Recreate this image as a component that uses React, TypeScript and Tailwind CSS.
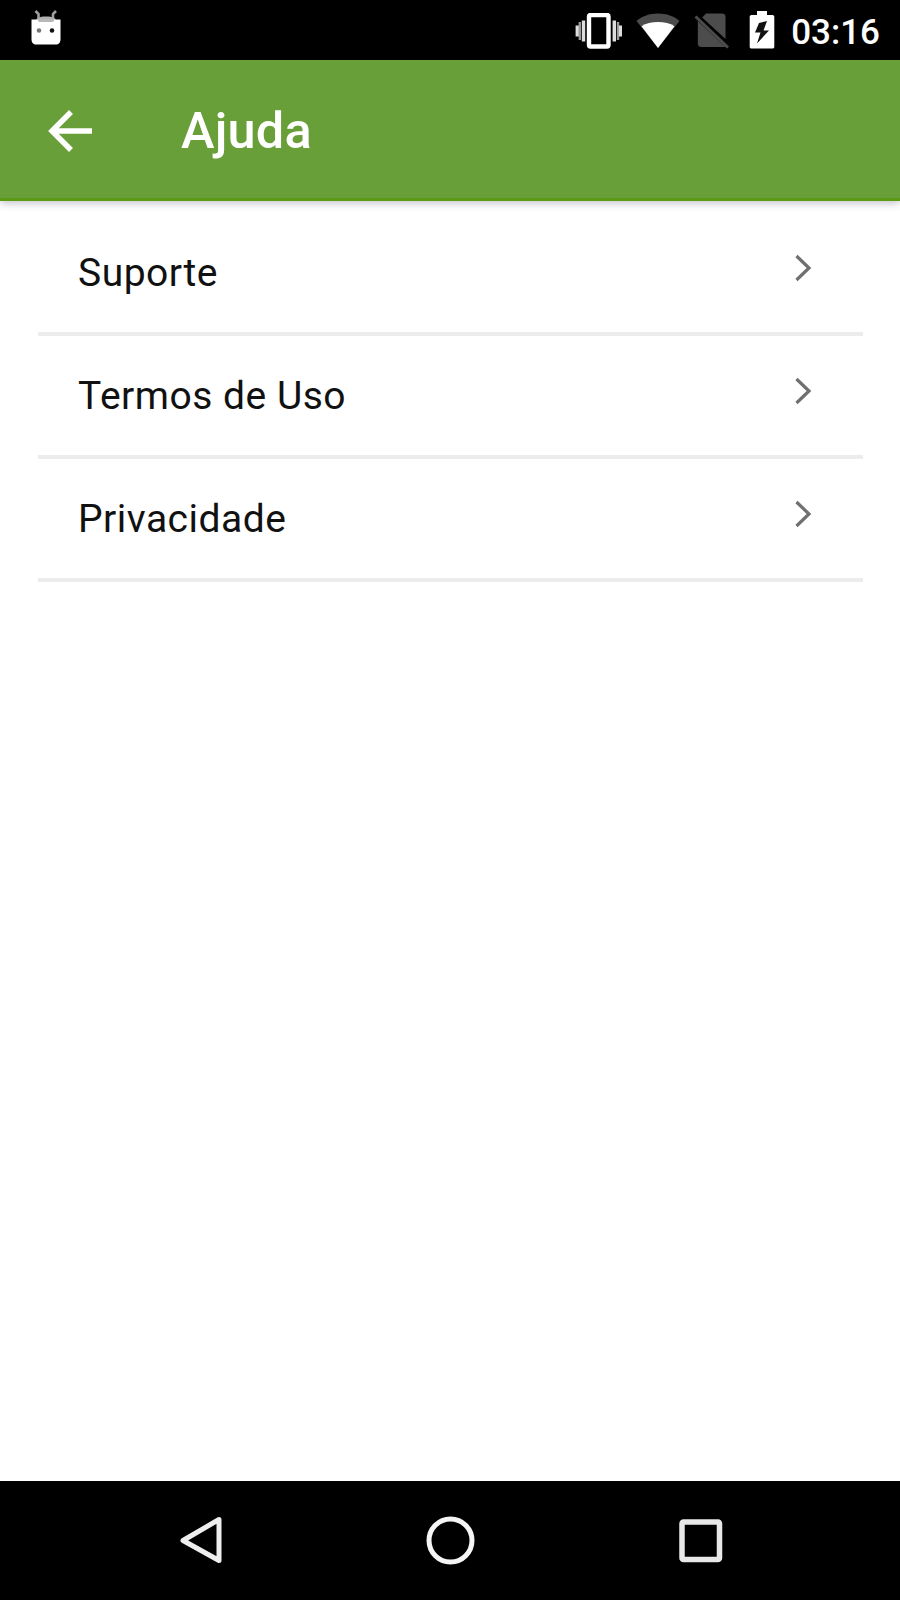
import React from 'react';

const items = [
  { id: 'support', label: 'Suporte' },
  { id: 'terms', label: 'Termos de Uso' },
  { id: 'privacy', label: 'Privacidade' },
];

function DroidIcon() {
  return (
    <svg className="h-[36px] w-[30px]" viewBox="0 0 30 36" fill="none">
      <path d="M4.500 1l3 3v4M25 1l-3 3v4" stroke="#a0a0a0" strokeWidth="2.600" />
      <path d="M5 11c0-3 3-4.500 10-4.500S25 8 25 11z" fill="#b0b0b0" />
      <path d="M.500 9.500h29v20c0 3-2 5-4.500 5H5c-2.500 0-4.500-2-4.500-5z" fill="#fff" />
      <path d="M6 9h18l-2 3H8z" fill="#b8b8b8" />
      <circle cx="8" cy="20.500" r="2.300" fill="#777" />
      <circle cx="21" cy="20.500" r="2.300" fill="#111" />
    </svg>
  );
}

function VibrateIcon() {
  return (
    <svg className="h-[36px] w-[48px]" viewBox="0 0 48 36" fill="none">
      <rect x="15" y="2" width="19.500" height="31.500" rx="1.500" stroke="#fff" strokeWidth="4.400" />
      <path d="M9.500 7.500v21M40.300 7.500v21" stroke="#ddd" strokeWidth="3.400" />
      <path d="M5.800 9v18M44 9v18" stroke="#999" strokeWidth="2.400" />
      <path d="M3.200 12.500v11M46.400 12.500v11" stroke="#ddd" strokeWidth="3.200" />
    </svg>
  );
}

function WifiIcon() {
  return (
    <svg className="h-[36px] w-[44px]" viewBox="0 0 44 36">
      <path d="M22 35L.500 8C6 3.200 13.500.500 22 .500S38 3.200 43.500 8z" fill="#4c4c4c" />
      <path d="M22 35L5.500 13.200C10 10.300 15.500 9 22 9s12 1.300 16.500 4.200z" fill="#fff" />
    </svg>
  );
}

function NoSimIcon() {
  return (
    <svg className="h-[36px] w-[36px]" viewBox="0 0 36 36">
      <path d="M12 .500H28c2 0 3.500 1.300 3.500 3v22.500L8 4.700z" fill="#4c4c4c" />
      <path d="M3.800 8L31.500 34H7.500c-2.200 0-3.700-1.300-3.700-3.300z" fill="#4c4c4c" />
      <path d="M1.500 3.500L34 34.500" stroke="#4c4c4c" strokeWidth="3" />
      <path d="M4.500 2.500L36 32" stroke="#000" strokeWidth="2" />
    </svg>
  );
}

function BatteryIcon() {
  return (
    <svg className="h-[38px] w-[26px]" viewBox="0 0 26 38">
      <path d="M8 0h10v4h5.500c1 0 1.800.800 1.800 1.800v30c0 1-.800 1.800-1.800 1.800h-21c-1 0-1.800-.800-1.800-1.800v-30c0-1 .800-1.800 1.800-1.800H8z" fill="#fff" />
      <path d="M18 10l-8 2-4 9.500h5.500L8 32.500 20 19.500h-5.500z" fill="#111" />
    </svg>
  );
}

function StatusBar() {
  return (
    <div className="flex h-[60px] items-start justify-between bg-black pr-[20px] pl-[31px]">
      <div className="pt-[10px]">
        <DroidIcon />
      </div>
      <div className="flex items-start pt-[11px]">
        <div className="mt-[2px] flex">
          <VibrateIcon />
          <div className="ml-[14px]">
            <WifiIcon />
          </div>
          <div className="ml-[14px]">
            <NoSimIcon />
          </div>
        </div>
        <div className="ml-[19px]">
          <BatteryIcon />
        </div>
        <span className="ml-[16px] pt-px text-[35px] leading-[42px] font-medium text-white">03:16</span>
      </div>
    </div>
  );
}

function Header() {
  return (
    <header className="flex h-[141px] items-center border-b-3 border-[#5b9a14] bg-[#689f38] pt-[3px] pl-[48px] shadow-[0_2px_8px_rgba(0,0,30,0.25)]">
      <svg className="h-[42px] w-[46px]" viewBox="0 0 46 42" fill="none" stroke="#fff" strokeWidth="5.500">
        <path d="M23 2L4 21l19 19M4 21h40" />
      </svg>
      <h1 className="ml-[87px] pt-px text-[50.500px] leading-[60px] font-medium tracking-[0.2px] text-white">Ajuda</h1>
    </header>
  );
}

function NavBar() {
  return (
    <nav className="flex h-[119px] items-center bg-black pl-[179px]">
      <svg className="h-[50px] w-[46px]" viewBox="0 0 46 50" fill="none" stroke="#eee" strokeWidth="5" strokeLinejoin="round">
        <path d="M4 24.500L40 3.500v41z" />
      </svg>
      <svg className="ml-[200px] h-[50px] w-[50px]" viewBox="0 0 50 50" fill="none" stroke="#f5f5f5" strokeWidth="5">
        <circle cx="25.500" cy="24.500" r="21.500" />
      </svg>
      <svg className="ml-[203px] h-[46px] w-[46px]" viewBox="0 0 46 46" fill="none" stroke="#e8e8e8" strokeWidth="5.500">
        <rect x="4" y="4" width="37.500" height="37.500" rx="1.500" />
      </svg>
    </nav>
  );
}

export default function App() {
  return (
    <div className="flex h-[1600px] w-[900px] flex-col bg-white font-[Roboto,sans-serif]">
      <StatusBar />
      <Header />
      <main className="flex-1 pt-[12px] pr-[37px] pl-[38px]">
        {items.map((item) => (
          <div
            key={item.id}
            className="flex h-[123px] items-center justify-between border-b-4 border-[#ececec] pr-[50px] pl-[40px]"
          >
            <span className="text-[39px] leading-[46px] tracking-[0.5px] text-[#111]">{item.label}</span>
            <svg className="mb-[10px] h-[28px] w-[18px]" viewBox="0 0 18 28" fill="none" stroke="#707070" strokeWidth="3.200">
              <path d="M1.500 2L14 14 1.500 26" />
            </svg>
          </div>
        ))}
      </main>
      <NavBar />
    </div>
  );
}
